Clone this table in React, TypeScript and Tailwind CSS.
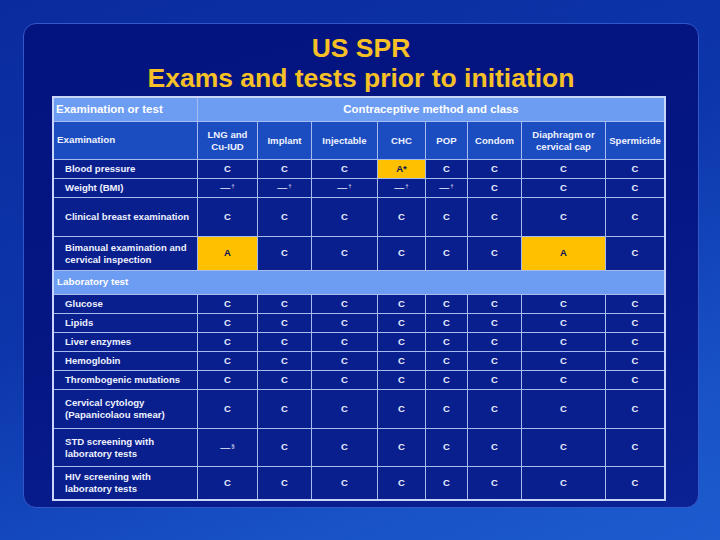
import React from "react";

type Cell = string;

const cols = [
  "LNG and\nCu-IUD",
  "Implant",
  "Injectable",
  "CHC",
  "POP",
  "Condom",
  "Diaphragm or\ncervical cap",
  "Spermicide",
];

const C8: Cell[] = ["C", "C", "C", "C", "C", "C", "C", "C"];

const exams: { label: string; cells: Cell[] }[] = [
  { label: "Blood pressure", cells: ["C", "C", "C", "A*", "C", "C", "C", "C"] },
  { label: "Weight (BMI)", cells: ["—†", "—†", "—†", "—†", "—†", "C", "C", "C"] },
  { label: "Clinical breast examination", cells: C8 },
  {
    label: "Bimanual examination and\ncervical inspection",
    cells: ["A", "C", "C", "C", "C", "C", "A", "C"],
  },
];

const labs: { label: string; cells: Cell[] }[] = [
  { label: "Glucose", cells: C8 },
  { label: "Lipids", cells: C8 },
  { label: "Liver enzymes", cells: C8 },
  { label: "Hemoglobin", cells: C8 },
  { label: "Thrombogenic mutations", cells: C8 },
  { label: "Cervical cytology\n(Papanicolaou smear)", cells: C8 },
  { label: "STD screening with\nlaboratory tests", cells: ["—§", "C", "C", "C", "C", "C", "C", "C"] },
  { label: "HIV screening with\nlaboratory tests", cells: C8 },
];

function Value({ v }: { v: Cell }) {
  const isA = v.startsWith("A");
  if (v.startsWith("—")) {
    return (
      <div className="flex items-center justify-center bg-[#0a1f8e] text-[#e8eeff]">
        <span className="text-[10px] leading-none">—</span>
        <span className="text-[6px] leading-none -mt-[4px] ml-[1px]">{v.slice(1)}</span>
      </div>
    );
  }
  if (isA) {
    return (
      <div className="flex items-center justify-center bg-[#ffc000] text-[#0a1450] font-bold text-[9.5px]">
        {v}
      </div>
    );
  }
  return (
    <div className="flex items-center justify-center bg-[#0a1f8e] text-[#e8eeff] font-bold text-[9.5px]">
      {v}
    </div>
  );
}

function Label({ text }: { text: string }) {
  return (
    <div className="flex items-center bg-[#0a1f8e] pl-[11px] text-[#eef2ff] font-bold text-[9.6px] leading-[12px] whitespace-pre-line">
      {text}
    </div>
  );
}

export default function App() {
  return (
    <div
      className="w-[720px] h-[540px] overflow-hidden bg-[linear-gradient(160deg,#0a2b9e_0%,#0d36ac_45%,#1852c6_80%,#1c5ccf_100%)] pt-[23px] pl-[23px]"
      style={{ fontFamily: '"Liberation Sans", Arial, sans-serif' }}
    >
      <div className="w-[676px] h-[485px] rounded-[13px] border border-[#3356c8] bg-[linear-gradient(165deg,#03137f_0%,#051784_55%,#0a2294_100%)] flex flex-col items-start">
        <div className="w-full pt-[9px] text-center text-[#f6c026] font-bold text-[26.5px] leading-[30px]">
          <div>US SPR</div>
          <div>Exams and tests prior to initiation</div>
        </div>
        <div className="mt-[3px] ml-[28px] grid grid-cols-[143px_59px_53px_65px_47px_41px_53px_83px_58px] grid-rows-[23px_37px_18px_18px_38px_33px_23px_18px_18px_18px_18px_18px_38px_37px_32px] gap-px bg-[#a8bbee] border-2 border-[#c9d6fa]">
          <div className="flex items-center bg-[#6c9df3] pl-[2px] text-white font-bold text-[11.5px]">
            Examination or test
          </div>
          <div className="col-span-8 flex items-center justify-center bg-[#6c9df3] text-white font-bold text-[11.4px]">
            Contraceptive method and class
          </div>

          <div className="flex items-center bg-[#1b4cc0] pl-[3px] text-[#eef2ff] font-bold text-[9.8px]">
            Examination
          </div>
          {cols.map((c) => (
            <div
              key={c}
              className="flex items-center justify-center text-center bg-[#1b4cc0] text-[#eef2ff] font-bold text-[9.6px] leading-[12px] whitespace-pre-line"
            >
              {c}
            </div>
          ))}

          {exams.map((r) => (
            <React.Fragment key={r.label}>
              <Label text={r.label} />
              {r.cells.map((v, i) => (
                <Value key={i} v={v} />
              ))}
            </React.Fragment>
          ))}

          <div className="col-span-9 flex items-center bg-[#6c9df3] pl-[3px] text-white font-bold text-[9.8px]">
            Laboratory test
          </div>

          {labs.map((r) => (
            <React.Fragment key={r.label}>
              <Label text={r.label} />
              {r.cells.map((v, i) => (
                <Value key={i} v={v} />
              ))}
            </React.Fragment>
          ))}
        </div>
      </div>
    </div>
  );
}
